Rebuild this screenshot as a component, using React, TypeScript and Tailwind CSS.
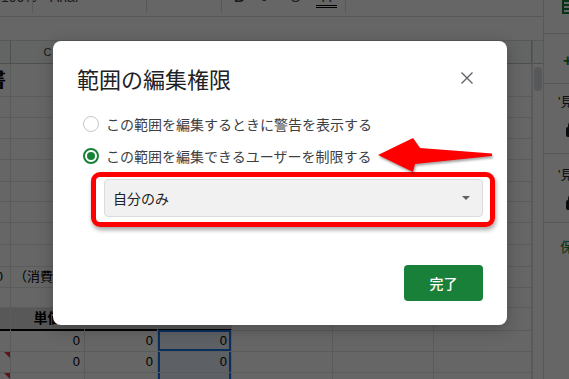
import React from 'react';

const sheetFont = '"Liberation Sans", "Noto Sans CJK JP", sans-serif';
const uiFont = '"Noto Sans CJK JP", "Noto Sans", sans-serif';

const columns = ['B', 'C', 'D', 'E', 'F', 'G', 'H'];
const rowHeights = [33, 21, 21, 21, 22, 20, 21, 22, 22, 20, 21, 22, 22, 21, 21];

function Cell({ row, col }: { row: number; col: number }) {
    const base =
        'relative flex items-center justify-end pr-[4px] border-r border-b border-[#e2e3e3] text-[13px] text-black whitespace-nowrap';

    if (row === 0 && col === 0) {
        return (
            <div className={base + ' pr-[1px]'}>
                <span className="text-[20px] font-bold">見積書</span>
            </div>
        );
    }
    if (row === 9 && col === 0) {
        return <div className={base + ' pr-[7px]'}>0</div>;
    }
    if (row === 9 && col === 1) {
        return <div className={base + ' justify-start pl-[3px]'}>（消費税込）</div>;
    }
    if (row === 11 && col < 4) {
        return (
            <div className="flex items-center justify-center bg-[#dcdcdc] border-r border-r-[#e2e3e3] border-b-2 border-b-black text-[14px] font-bold">
                {col === 1 ? '単価' : ''}
            </div>
        );
    }
    if (col === 0 && (row === 13 || row === 14)) {
        return (
            <div className={base}>
                <span className="absolute right-0 top-0 w-0 h-0 border-t-[6px] border-t-[#e53935] border-l-[6px] border-l-transparent" />
            </div>
        );
    }
    if (col === 3 && row === 12) {
        return (
            <div className={base + ' bg-[#e8f0fd] shadow-[inset_0_0_0_2px_#1a73e8]'}>0</div>
        );
    }
    if (col === 3 && row > 12) {
        return (
            <div className={base + ' bg-[#e8f0fd] shadow-[inset_2px_0_0_#1a73e8,inset_-2px_0_0_#1a73e8]'}>
                {row === 13 ? '0' : ''}
            </div>
        );
    }
    if ((row === 12 || row === 13) && (col === 1 || col === 2)) {
        return <div className={base}>0</div>;
    }
    return <div className={base} />;
}

function Toolbar() {
    return (
        <div className="h-[17px] shrink-0 border-b border-[#dadce0] overflow-hidden">
            <div className="flex items-start -mt-[10px] text-[14px] leading-[14px] text-[#444]">
                <span className="w-[32px] pl-[1px]">100%</span>
                <span className="w-px h-[23px] bg-[#dadce0]" />
                <span className="w-[113px] pl-[17px]">Arial</span>
                <span className="w-px h-[23px] bg-[#dadce0]" />
                <span className="w-[74px]" />
                <span className="w-px h-[23px] bg-[#dadce0]" />
                <span className="ml-[12px] font-bold">B</span>
                <span className="ml-[18px] italic font-serif">I</span>
                <span className="ml-[24px] line-through">S</span>
                <span className="ml-[16px] flex flex-col items-center w-[21px]">
                    <span>A</span>
                    <span className="w-full h-px bg-black mt-[1px]" />
                    <span className="w-full h-px bg-black mt-[1px]" />
                </span>
                <span className="ml-[8px] w-px h-[23px] bg-[#dadce0]" />
            </div>
        </div>
    );
}

function Sheet() {
    return (
        <div className="flex flex-1 min-h-0">
            <div className="w-[532px] flex flex-col">
                <div className="h-[23px] shrink-0 grid grid-cols-[11px_74px_73px_74px_101px_101px_98px] bg-[#f8f9fa] border-b border-[#c4c7c5]">
                    {columns.map((c) => (
                        <div
                            key={c}
                            className="flex items-center justify-center border-r border-[#c4c7c5] text-[11px] text-[#444]"
                        >
                            {c === 'B' ? '' : c}
                        </div>
                    ))}
                </div>
                {rowHeights.map((h, r) => (
                    <div
                        key={r}
                        className="grid grid-cols-[11px_74px_73px_74px_101px_101px_98px] shrink-0"
                        style={{ height: h }}
                    >
                        {columns.map((c, ci) => (
                            <Cell key={c} row={r} col={ci} />
                        ))}
                    </div>
                ))}
            </div>
            <div className="w-[11px] border-l border-[#dadce0] flex flex-col items-center">
                <div className="w-full h-[23px] shrink-0 bg-[#f8f9fa] border-b border-[#c4c7c5]" />
                <div className="mt-[3px] w-[8px] h-[24px] rounded-full bg-[#dadce0]" />
            </div>
        </div>
    );
}

function LockIcon() {
    return (
        <svg className="ml-[8px] mt-[9px]" width="14" height="16" viewBox="0 0 14 16">
            <rect x="0" y="6" width="14" height="10" rx="2" fill="#202124" />
            <path d="M3 7V4.5a4 4 0 0 1 8 0V7" stroke="#202124" strokeWidth="2" fill="none" />
        </svg>
    );
}

function SidePanel() {
    return (
        <div className="w-[26px] border-l border-[#dadce0] flex flex-col overflow-hidden text-[13px] whitespace-nowrap">
            <div className="h-[34px] shrink-0 border-b border-[#dadce0] pl-[18px]">
                <div className="w-[14px] h-[14px] bg-[#188038] flex flex-col justify-center gap-[2px] px-[2px]">
                    <span className="h-[2px] bg-white" />
                    <span className="h-[2px] bg-white" />
                    <span className="h-[2px] bg-white" />
                </div>
            </div>
            <div className="h-[50px] shrink-0 border-b border-[#dadce0] flex items-center pt-[4px] pl-[19px] text-[#188038] text-[16px] font-bold">
                + シートまたは範囲を追加
            </div>
            <div className="h-[70px] shrink-0 border-b border-[#dadce0] flex flex-col pl-[14px] pt-[8px]">
                <span className="text-[#202124]">'見積書'!E13:E14</span>
                <LockIcon />
            </div>
            <div className="h-[69px] shrink-0 border-b border-[#dadce0] flex flex-col pl-[14px] pt-[11px]">
                <span className="text-[#202124]">'見積書'!C13:C14</span>
                <LockIcon />
            </div>
            <div className="pl-[16px] pt-[14px] text-[#188038] text-[14px]">保護されたシート</div>
        </div>
    );
}

function Radio({ checked, label }: { checked: boolean; label: string }) {
    return (
        <label className="flex items-center h-[32px] pl-[6px] gap-[7px]">
            {checked ? (
                <span className="w-[16px] h-[16px] rounded-full border-2 border-[#188038] flex items-center justify-center">
                    <span className="w-[8px] h-[8px] rounded-full bg-[#188038]" />
                </span>
            ) : (
                <span className="w-[16px] h-[16px] rounded-full border-[1.5px] border-[#c4c7c5]" />
            )}
            <span className="text-[14px] leading-[20px] text-[#3c4043]">{label}</span>
        </label>
    );
}

function RangeDialog() {
    return (
        <div
            className="absolute left-[53px] top-[41px] w-[454px] h-[284px] bg-white rounded-[8px] shadow-[0_4px_16px_rgba(0,0,0,0.25)] flex flex-col px-6 pt-[22px] pb-6"
            style={{ fontFamily: uiFont }}
        >
            <div className="flex items-center justify-between h-[30px]">
                <h2 className="text-[22px] leading-[30px] text-[#202124]">範囲の編集権限</h2>
                <svg className="mr-[10px]" width="12" height="12" viewBox="0 0 12 12">
                    <path d="M0.5 0.5L11.5 11.5M11.5 0.5L0.5 11.5" stroke="#5f6368" strokeWidth="1.4" />
                </svg>
            </div>
            <div className="mt-[15px] flex flex-col">
                <Radio checked={false} label="この範囲を編集するときに警告を表示する" />
                <Radio checked label="この範囲を編集できるユーザーを制限する" />
            </div>
            <div className="relative mt-[7px] ml-[27px] h-[38px] flex items-center justify-between pl-[8px] pr-[12px] bg-[#f1f1f1] border border-[#dcdcdc] rounded-[4px]">
                <span className="text-[14px] text-[#202124]">自分のみ</span>
                <span className="w-0 h-0 border-l-[4px] border-r-[4px] border-t-[4px] border-l-transparent border-r-transparent border-t-[#5f6368]" />
                <div className="absolute -left-[14px] -right-[13px] -top-[8px] -bottom-[11px] border-[5px] border-[#ff0000] rounded-[9px] shadow-[1px_3px_4px_rgba(0,0,0,0.35)]" />
            </div>
            <div className="mt-auto flex justify-end">
                <button className="w-[79px] h-[36px] rounded-[4px] bg-[#188038] text-white text-[14px] font-medium">
                    完了
                </button>
            </div>
        </div>
    );
}

export default function App() {
    return (
        <div
            className="relative w-[569px] h-[379px] overflow-hidden bg-white flex"
            style={{ fontFamily: sheetFont }}
        >
            <div className="w-[543px] flex flex-col">
                <Toolbar />
                <div className="h-[24px] shrink-0 border-b border-[#dadce0]" />
                <Sheet />
            </div>
            <SidePanel />

            <div className="absolute inset-0 bg-black/60" />

            <RangeDialog />

            <svg
                className="absolute left-[375px] top-[134px] drop-shadow-[1px_2px_1px_rgba(0,0,0,0.35)]"
                width="122"
                height="42"
                viewBox="0 0 122 42"
            >
                <polygon points="3,21 38,4 45,14 117,19.5 117,22 40,30 38,38" fill="#ff0000" />
            </svg>
        </div>
    );
}
